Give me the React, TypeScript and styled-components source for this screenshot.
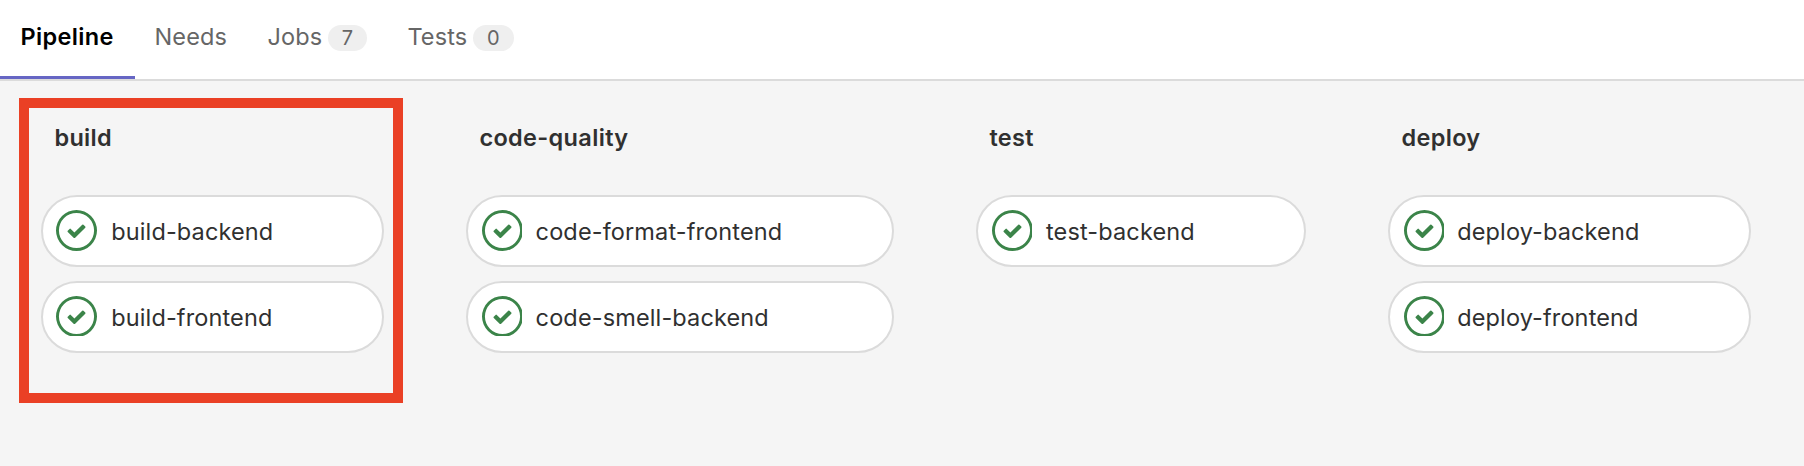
import React from 'react';
import styled, { createGlobalStyle, css } from 'styled-components';

const GlobalStyle = createGlobalStyle`
  *, *::before, *::after { box-sizing: border-box; }
  body {
    margin: 0;
    background: #f5f5f5;
    color: #303030;
    font-family: Inter, "Liberation Sans", sans-serif;
    font-size: 23.5px;
    line-height: 28px;
    letter-spacing: 0.13px;
  }
`;

const Page = styled.main`
  display: flex;
  flex-direction: column;
  min-height: 466px;
`;

const TabBar = styled.nav`
  display: flex;
  height: 81px;
  background: #fff;
  border-bottom: 2px solid #dbdbdb;
`;

const Tab = styled.a<{ $active?: boolean }>`
  display: flex;
  align-items: flex-start;
  height: 79px;
  padding: 23px 21px 0 19.5px;
  color: #666;
  white-space: nowrap;
  ${({ $active }) =>
    $active &&
    css`
      width: 135px;
      padding-left: 20.5px;
      color: #000;
      font-weight: 600;
      letter-spacing: 0.34px;
      border-bottom: 3px solid #6666c4;
    `}
`;

const Badge = styled.span<{ $width: number }>`
  width: ${({ $width }) => $width}px;
  height: 26px;
  margin: 2px 0 0 5.5px;
  border-radius: 13px;
  background: #efefef;
  font-size: 20px;
  line-height: 26px;
  letter-spacing: 0;
  text-align: center;
`;

const Stages = styled.section`
  display: flex;
  gap: 82px;
  padding: 43px 0 0 41px;
`;

const Stage = styled.div<{ $width: number }>`
  position: relative;
  width: ${({ $width }) => $width}px;
`;

const Highlight = styled.div`
  position: absolute;
  top: -26px;
  left: -22px;
  width: 384px;
  height: 305px;
  border: 10px solid #ea4025;
  pointer-events: none;
`;

const StageTitle = styled.h2`
  margin: 0 0 43px;
  padding-left: 13.4px;
  font-size: inherit;
  font-weight: 600;
  letter-spacing: 0.34px;
`;

const JobList = styled.div`
  display: flex;
  flex-direction: column;
  gap: 14px;
`;

const Job = styled.div<{ $inset: number }>`
  display: flex;
  align-items: flex-start;
  height: 72px;
  padding: 13px 0 0 ${({ $inset }) => $inset}px;
  border: 2px solid #dbdbdb;
  border-radius: 36px;
  background: #fff;
`;

const IconBox = styled.span`
  display: flex;
  width: 41px;
  flex: none;
`;

const JobName = styled.span<{ $shift: number }>`
  margin: 8px 0 0 ${({ $shift }) => $shift}px;
  white-space: nowrap;
`;

const UNIT = 14 / 41;

function SuccessIcon({ width, height }: { width: number; height: number }) {
  return (
    <IconBox>
      <svg width={width} height={height} viewBox={`0 0 ${width * UNIT} ${height * UNIT}`} fill="#3b8449">
        <path
          fillRule="evenodd"
          d="M0 7a7 7 0 1 1 14 0A7 7 0 0 1 0 7zM13 7A6 6 0 1 0 1 7a6 6 0 0 0 12 0z"
        />
        <path d="M6.278 7.697L5.045 6.464a.296.296 0 0 0-.42-.002l-.613.614a.298.298 0 0 0 .002.42l1.91 1.909a.5.5 0 0 0 .703.005l.265-.265L9.997 6.04a.291.291 0 0 0-.009-.408l-.614-.614a.29.29 0 0 0-.408-.009L6.278 7.697z" />
      </svg>
    </IconBox>
  );
}

const tabs = [
  { label: 'Pipeline', active: true },
  { label: 'Needs' },
  { label: 'Jobs', count: 7, badge: 39 },
  { label: 'Tests', count: 0, badge: 41 },
];

const stages = [
  { name: 'build', width: 343, inset: 13, icon: 41, shift: 14.2, highlighted: true, jobs: ['build-backend', 'build-frontend'] },
  { name: 'code-quality', width: 428, inset: 14, icon: 40, shift: 12.6, jobs: ['code-format-frontend', 'code-smell-backend'] },
  { name: 'test', width: 330, inset: 14, icon: 40, shift: 13, jobs: ['test-backend'] },
  { name: 'deploy', width: 363, inset: 14, icon: 40, shift: 12.2, jobs: ['deploy-backend', 'deploy-frontend'] },
];

export default function App() {
  return (
    <Page>
      <GlobalStyle />
      <TabBar>
        {tabs.map((tab) => (
          <Tab key={tab.label} $active={tab.active}>
            {tab.label}
            {tab.badge && <Badge $width={tab.badge}>{tab.count}</Badge>}
          </Tab>
        ))}
      </TabBar>
      <Stages>
        {stages.map((stage) => (
          <Stage key={stage.name} $width={stage.width}>
            <StageTitle>{stage.name}</StageTitle>
            <JobList>
              {stage.jobs.map((job, row) => (
                <Job key={job} $inset={stage.inset}>
                  <SuccessIcon width={stage.icon} height={row === 0 ? 41 : 40} />
                  <JobName $shift={stage.shift}>{job}</JobName>
                </Job>
              ))}
            </JobList>
            {stage.highlighted && <Highlight />}
          </Stage>
        ))}
      </Stages>
    </Page>
  );
}
